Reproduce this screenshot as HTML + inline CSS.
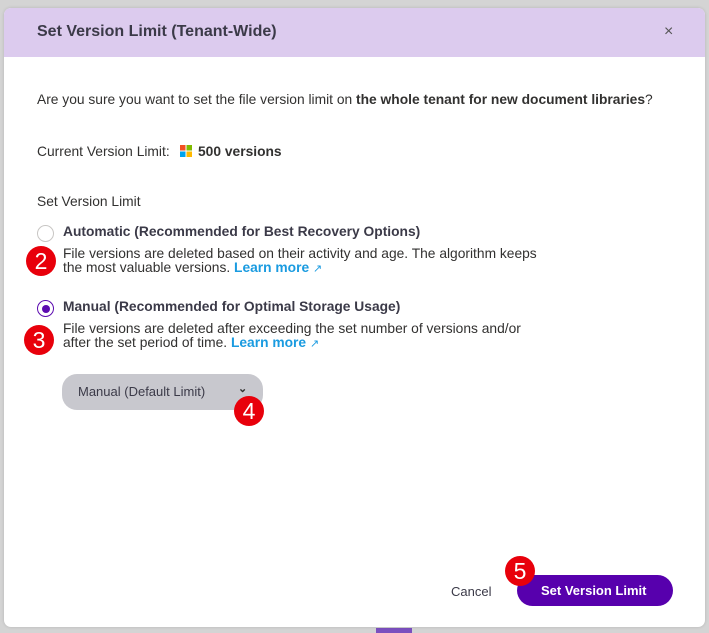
<!DOCTYPE html>
<html><head><style>
body{margin:0;width:709px;height:633px;background:#d4d4d4;font-family:"Liberation Sans",sans-serif;position:relative;overflow:hidden;color:#323130}
.dlg{position:absolute;left:4px;top:8px;width:701px;height:619px;background:#fff;border-radius:7px;overflow:hidden;box-shadow:0 0 3px rgba(0,0,0,.15)}
.hd{position:absolute;left:0;top:0;width:100%;height:49px;background:#dccbee}
.t{position:absolute;white-space:nowrap;font-size:13.8px}
.badge{position:absolute;width:30px;height:30px;border-radius:50%;background:#e8000b;color:#fff;font-size:23px;text-align:center;line-height:31px;font-family:"Liberation Sans",sans-serif}
.lm{color:#1a9be0;font-weight:bold}
.radio{position:absolute;width:15px;height:15px;border-radius:50%;border:1px solid #c8c6c4;background:#fff}
</style></head><body>
<div style="position:absolute;left:376px;top:628px;width:36px;height:5px;background:#7b4fbf"></div>
<div class="dlg">
<div class="hd"></div>
<div class="t" style="left:33px;top:15px;font-size:16px;font-weight:bold;color:#3b3a48">Set Version Limit (Tenant-Wide)</div>
<div class="t" style="left:660px;top:15px;font-size:16px;color:#555">×</div>
<div class="t" style="left:33px;top:84px">Are you sure you want to set the file version limit on <b>the whole tenant for new document libraries</b>?</div>
<div class="t" style="left:33px;top:136px">Current Version Limit:</div>
<svg style="position:absolute;left:176px;top:137px" width="12" height="12"><rect width="5.5" height="5.5" fill="#f25022"/><rect x="6.5" width="5.5" height="5.5" fill="#7fba00"/><rect y="6.5" width="5.5" height="5.5" fill="#00a4ef"/><rect x="6.5" y="6.5" width="5.5" height="5.5" fill="#ffb900"/></svg>
<div class="t" style="left:194px;top:136px;font-weight:bold">500 versions</div>
<div class="t" style="left:33px;top:186px">Set Version Limit</div>
<div class="radio" style="left:33px;top:217px"></div>
<div class="t" style="left:59px;top:216px;font-weight:bold;color:#3b3a48">Automatic (Recommended for Best Recovery Options)</div>
<div class="t" style="left:59px;top:239px;line-height:14px">File versions are deleted based on their activity and age. The algorithm keeps<br>the most valuable versions. <span class="lm">Learn more</span> <span style="color:#1a9be0;font-size:11px">↗</span></div>
<div class="radio" style="left:33px;top:292px;border-color:#5c0bb0"><div style="position:absolute;left:3.5px;top:3.5px;width:8px;height:8px;border-radius:50%;background:#5c0bb0"></div></div>
<div class="t" style="left:59px;top:291px;font-weight:bold;color:#3b3a48">Manual (Recommended for Optimal Storage Usage)</div>
<div class="t" style="left:59px;top:314px;line-height:14px">File versions are deleted after exceeding the set number of versions and/or<br>after the set period of time. <span class="lm">Learn more</span> <span style="color:#1a9be0;font-size:11px">↗</span></div>
<div style="position:absolute;left:58px;top:366px;width:201px;height:36px;border-radius:15px;background:#c8c8ce"></div>
<div class="t" style="left:74px;top:376px;font-size:13px;color:#3b3a48">Manual (Default Limit)</div>
<div class="t" style="left:234px;top:374px;font-size:11px;font-weight:bold">⌄</div>
<div class="t" style="left:447px;top:576px;font-size:13px;color:#3b3a48">Cancel</div>
<div style="position:absolute;left:513px;top:567px;width:156px;height:31px;border-radius:16px;background:#5700ad"></div>
<div class="t" style="left:537px;top:575px;font-size:13px;color:#fff;font-weight:bold">Set Version Limit</div>
</div>
<div class="badge" style="left:26px;top:246px">2</div>
<div class="badge" style="left:24px;top:325px">3</div>
<div class="badge" style="left:234px;top:396px">4</div>
<div class="badge" style="left:505px;top:556px">5</div>
</body></html>
